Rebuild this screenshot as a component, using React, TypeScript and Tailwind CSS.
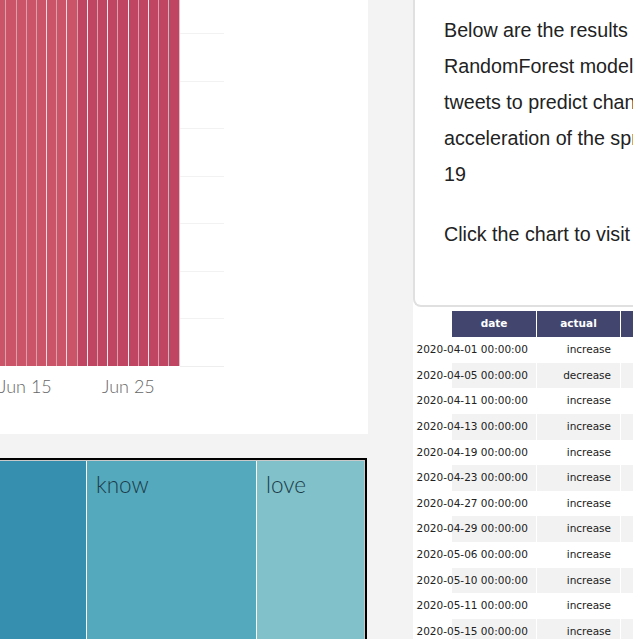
const separators = [
  "#d9a0ad", "#d9a0ad", "#d9a0ad", "#d9a0ad", "#eedde0", "#d9a0ad", "#eedde0", "#d9a0ad",
  "#f5e6e9", "#d9a0ad", "#f5e6e9", "#d9a0ad", "#eef2ee", "#d9a0ad", "#f5e6e9", "#d9a0ad", "#b9bcc4", "#e3c0c8",
];
const gridRows = Array.from({ length: 7 });
const lines = [
  "Below are the results from a",
  "RandomForest model trained on",
  "tweets to predict changes in the",
  "acceleration of the spread of COVID-",
  "19",
];
const rows = [
  ["2020-04-01 00:00:00", "increase"],
  ["2020-04-05 00:00:00", "decrease"],
  ["2020-04-11 00:00:00", "increase"],
  ["2020-04-13 00:00:00", "increase"],
  ["2020-04-19 00:00:00", "increase"],
  ["2020-04-23 00:00:00", "increase"],
  ["2020-04-27 00:00:00", "increase"],
  ["2020-04-29 00:00:00", "increase"],
  ["2020-05-06 00:00:00", "increase"],
  ["2020-05-10 00:00:00", "increase"],
  ["2020-05-11 00:00:00", "increase"],
  ["2020-05-15 00:00:00", "increase"],
];

export default function App() {
  return (
    <div className="w-[633px] h-[639px] overflow-hidden bg-[#f3f3f3] flex font-['Liberation_Sans',sans-serif]">
      <div className="w-[368px] shrink-0 flex flex-col">
        <div className="h-[434px] bg-white shrink-0 flex flex-col">
          <div className="flex h-[367px] shrink-0">
            <div className="w-[179.5px] h-[366px] flex justify-end overflow-hidden shrink-0">
              {separators.map((c, i) => (
                <div
                  key={i}
                  style={{ borderRightColor: c }}
                  className={
                    i < 8
                      ? "w-[10.2px] shrink-0 bg-[#cb5469] border-r"
                      : "w-[10.2px] shrink-0 bg-[#c04562] border-r"
                  }
                />
              ))}
            </div>
            <div className="w-[44.5px] flex flex-col pt-[33px]">
              {gridRows.map((_, i) => (
                <div key={i} className="h-[47.6px] border-t border-[#f2f2f2]" />
              ))}
              <div className="border-t border-[#eeeeee]" />
            </div>
          </div>
          <div className="relative h-[40px] font-['Lato',sans-serif] font-light text-[18px] text-[#666666]">
            <span className="absolute left-[-1px] top-[6px] whitespace-nowrap">Jun 15</span>
            <span className="absolute left-[102px] top-[6px] whitespace-nowrap">Jun 25</span>
          </div>
        </div>
        <div className="mt-[24px] mr-[1px] flex-1 border-t-2 border-r-2 border-black font-['Lato',sans-serif] font-light text-[22.5px] text-[#1b3b48]">
          <div className="h-full flex border-t border-r border-[#c9c9c9]">
            <div className="w-[86px] bg-[#378fb0]" />
            <div className="w-[170px] bg-[#54a9bd] border-l border-white pl-[9px] pt-[9px] leading-[30px]">know</div>
            <div className="flex-1 bg-[#80c1ca] border-l border-white pl-[9px] pt-[9px] leading-[30px]">love</div>
          </div>
        </div>
      </div>
      <div className="ml-[45px] w-[400px] shrink-0 flex flex-col bg-white">
        <div className="h-[307px] shrink-0 bg-white border-l-2 border-b-2 border-[#e0e0e0] rounded-bl-[8px] pl-[29px] pt-[12px] text-[19.7px] leading-[36px] text-[#222222]">
          {lines.map((l) => (
            <div key={l} className="whitespace-nowrap">{l}</div>
          ))}
          <div className="whitespace-nowrap mt-[24px]">Click the chart to visit the</div>
        </div>
        <div className="pl-[39px] pt-[4px] font-['DejaVu_Sans',sans-serif] text-[10.5px] text-[#222222]">
          <div className="flex h-[26px] text-white font-bold">
            <div className="w-[85px] bg-[#42466f] border-r border-white flex items-center justify-center">date</div>
            <div className="w-[84px] bg-[#42466f] border-r border-white flex items-center justify-center">actual</div>
            <div className="flex-1 bg-[#42466f]" />
          </div>
          {rows.map(([d, a], i) => (
            <div key={d} className="flex h-[25.65px] items-center">
              <div className={i % 2 ? "w-[85px] h-full bg-[#f2f2f2] border-r border-white flex items-center justify-end pr-[8px] whitespace-nowrap" : "w-[85px] h-full flex items-center justify-end pr-[8px] whitespace-nowrap border-r border-white"}>
                {d}
              </div>
              <div className={i % 2 ? "w-[84px] h-full bg-[#f2f2f2] border-r border-white flex items-center justify-end pr-[9px]" : "w-[84px] h-full flex items-center justify-end pr-[9px] border-r border-white"}>
                {a}
              </div>
              <div className={i % 2 ? "flex-1 h-full bg-[#f2f2f2]" : "flex-1 h-full"} />
            </div>
          ))}
        </div>
      </div>
    </div>
  );
}
